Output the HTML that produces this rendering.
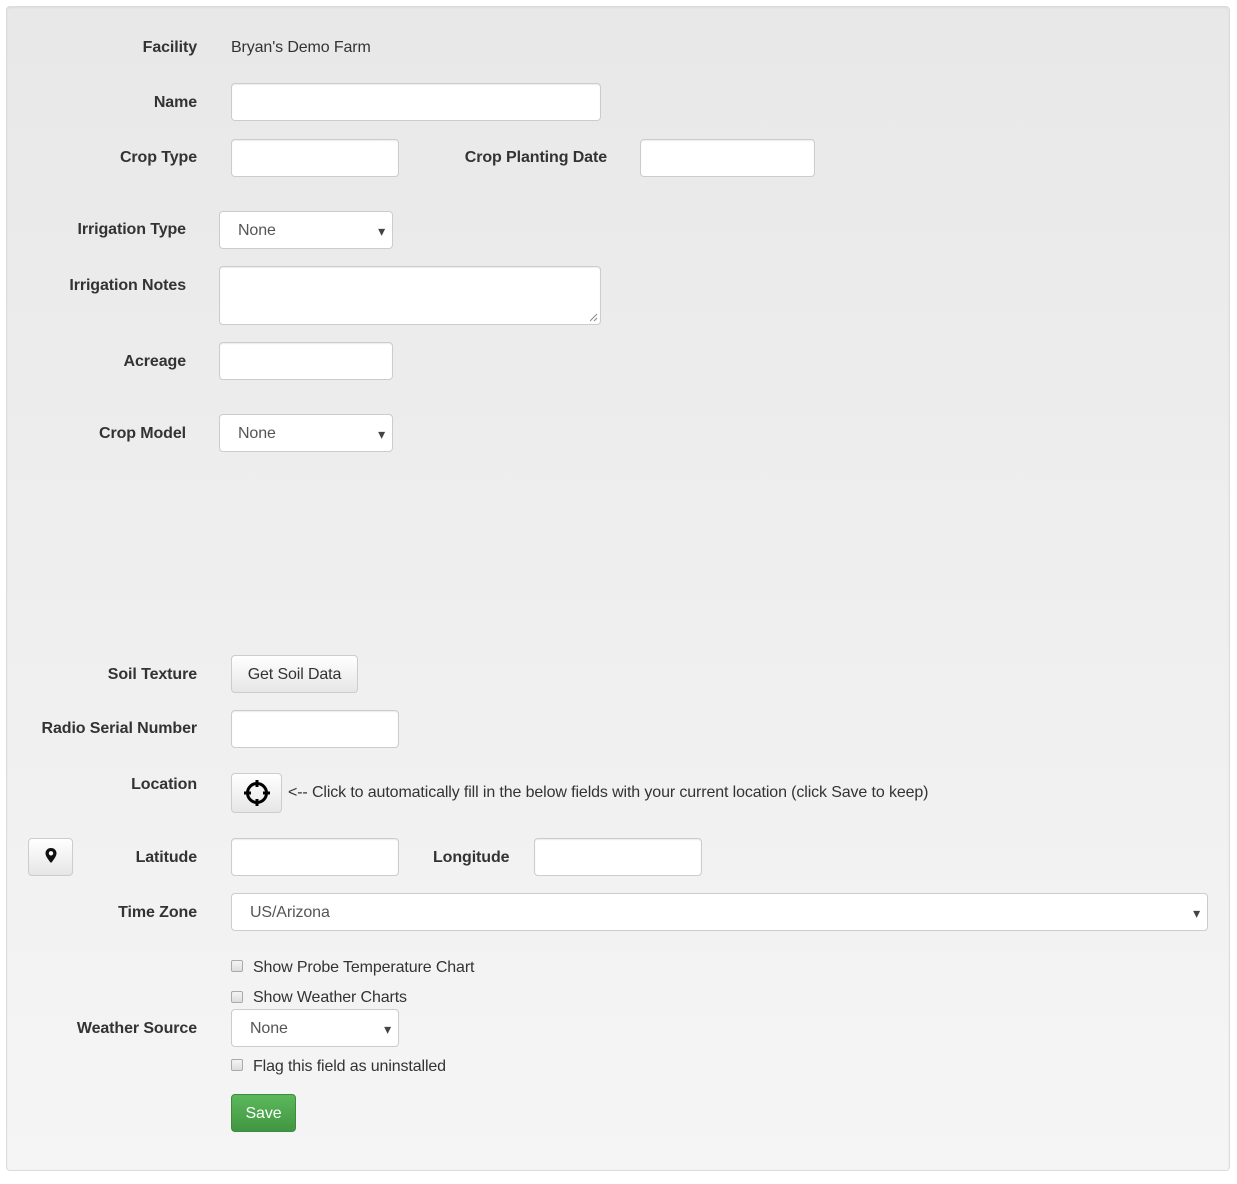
<!DOCTYPE html>
<html><head><meta charset="utf-8"><style>
*{box-sizing:border-box}
body{margin:0;width:1237px;height:1184px;background:#fff;font-family:"Liberation Sans",Arial,sans-serif;font-size:16px;color:#333;position:relative;overflow:hidden;letter-spacing:-0.12px}
.panel{position:absolute;left:6px;top:6px;width:1224px;height:1165px;border:1px solid #dcdcdc;border-radius:4px;background:linear-gradient(#e8e8e8,#f5f5f5);box-shadow:inset 0 1px 2px rgba(0,0,0,.05)}
.l{position:absolute;font-weight:bold;line-height:18px;text-align:right;white-space:nowrap;letter-spacing:-0.1px}
.i{position:absolute;background:#fff;border:1px solid #ccc;border-radius:4px;height:38px;box-shadow:inset 0 1px 1px rgba(0,0,0,.075)}
.s{position:absolute;background:#fff;border:1px solid #ccc;border-radius:4px;height:38px;line-height:38px;padding-left:18px;color:#555}
.s:after{content:"▾";position:absolute;right:7px;top:0;font-size:14px;color:#444}
.b{position:absolute;border:1px solid #ccc;border-radius:4px;background:linear-gradient(#fff,#e6e6e6);text-align:center;color:#333}
.t{position:absolute;line-height:18px;color:#333;white-space:nowrap}
.cb{position:absolute;width:12px;height:12px;border:1px solid #aaa;border-radius:2px;background:linear-gradient(#f4f4f4,#ddd)}
</style></head><body>
<div class="panel"></div>
<div class="l" style="right:1040px;top:39px">Facility</div>
<div class="t" style="left:231px;top:39px">Bryan's Demo Farm</div>
<div class="l" style="right:1040px;top:94px">Name</div>
<div class="i" style="left:231px;top:83px;width:370px"></div>
<div class="l" style="right:1040px;top:149px">Crop Type</div>
<div class="i" style="left:231px;top:139px;width:168px"></div>
<div class="l" style="right:630px;top:149px">Crop Planting Date</div>
<div class="i" style="left:640px;top:139px;width:175px"></div>
<div class="l" style="right:1051px;top:221px">Irrigation Type</div>
<div class="s" style="left:219px;top:211px;width:174px">None</div>
<div class="l" style="right:1051px;top:277px">Irrigation Notes</div>
<div class="i" style="left:219px;top:266px;width:382px;height:59px"></div>
<svg style="position:absolute;left:589px;top:313px" width="9" height="9"><path d="M8 1L1 8M8 5L5 8" stroke="#888" stroke-width="1"/></svg>
<div class="l" style="right:1051px;top:353px">Acreage</div>
<div class="i" style="left:219px;top:342px;width:174px"></div>
<div class="l" style="right:1051px;top:425px">Crop Model</div>
<div class="s" style="left:219px;top:414px;width:174px">None</div>
<div class="l" style="right:1040px;top:666px">Soil Texture</div>
<div class="b" style="left:231px;top:655px;width:127px;height:38px;line-height:37px">Get Soil Data</div>
<div class="l" style="right:1040px;top:720px">Radio Serial Number</div>
<div class="i" style="left:231px;top:710px;width:168px"></div>
<div class="l" style="right:1040px;top:776px">Location</div>
<div class="b" style="left:231px;top:773px;width:51px;height:40px">
<svg width="30" height="30" viewBox="0 0 30 30" style="margin-top:4px"><circle cx="15" cy="15" r="9.5" fill="none" stroke="#000" stroke-width="3"/><path d="M15 2v7M15 21v7M2 15h7M21 15h7" stroke="#000" stroke-width="3"/></svg></div>
<div class="t" style="left:288px;top:784px">&lt;-- Click to automatically fill in the below fields with your current location (click Save to keep)</div>
<div class="b" style="left:28px;top:838px;width:45px;height:38px">
<svg width="14" height="18" viewBox="0 0 14 18" style="margin-top:8px"><path d="M7 1C3.7 1 1.5 3.4 1.5 6.4 1.5 10 7 16 7 16S12.5 10 12.5 6.4C12.5 3.4 10.3 1 7 1Z" fill="#111"/><circle cx="7" cy="6.3" r="2.2" fill="#fff"/></svg></div>
<div class="l" style="right:1040px;top:849px">Latitude</div>
<div class="i" style="left:231px;top:838px;width:168px"></div>
<div class="l" style="left:433px;top:849px">Longitude</div>
<div class="i" style="left:534px;top:838px;width:168px"></div>
<div class="l" style="right:1040px;top:904px">Time Zone</div>
<div class="s" style="left:231px;top:893px;width:977px">US/Arizona</div>
<div class="cb" style="left:231px;top:960px"></div>
<div class="t" style="left:253px;top:959px">Show Probe Temperature Chart</div>
<div class="cb" style="left:231px;top:991px"></div>
<div class="t" style="left:253px;top:989px">Show Weather Charts</div>
<div class="l" style="right:1040px;top:1020px">Weather Source</div>
<div class="s" style="left:231px;top:1009px;width:168px">None</div>
<div class="cb" style="left:231px;top:1059px"></div>
<div class="t" style="left:253px;top:1058px">Flag this field as uninstalled</div>
<div style="position:absolute;left:231px;top:1094px;width:65px;height:38px;border:1px solid #3d8b3d;border-radius:4px;background:linear-gradient(#5cb85c,#419641);color:#fff;text-align:center;line-height:37px">Save</div>
</body></html>
